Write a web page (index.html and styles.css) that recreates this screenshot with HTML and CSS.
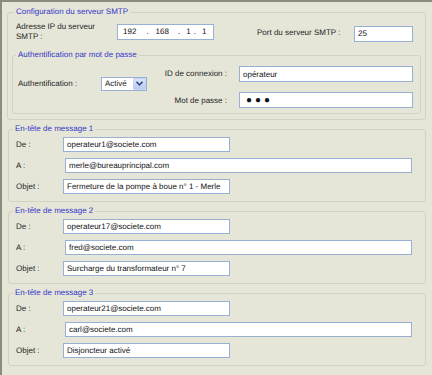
FILE: index.html
```html
<!DOCTYPE html>
<html lang="fr">
<head>
  <meta charset="UTF-8">
  <title>Configuration du serveur SMTP</title>
  <link rel="stylesheet" href="styles.css">
</head>
<body>
  <div class="frame">
    <fieldset class="group smtp">
      <legend>Configuration du serveur SMTP</legend>
      <div class="server-row">
        <label class="ip-label">Adresse IP du serveur<br>SMTP :</label>
        <div class="field ip">
          <span>192</span><span class="dot d1">.</span><span>168</span><span class="dot d2">.</span><span>1</span><span class="dot d3">.</span><span>1</span>
        </div>
        <label class="port-label">Port du serveur SMTP :</label>
        <input class="field port" type="text" value="25">
      </div>

      <fieldset class="group auth">
        <legend>Authentification par mot de passe</legend>
        <div class="auth-grid">
          <label class="auth-label">Authentification :</label>
          <div class="select">
            <span class="select-value">Activé</span>
            <span class="select-btn">
              <svg width="7" height="5" viewBox="0 0 7 5"><path d="M0.5 0.8 L3.5 3.8 L6.5 0.8" fill="none" stroke="#3b4f8a" stroke-width="1.6"/></svg>
            </span>
          </div>
          <label class="right-label id-label">ID de connexion :</label>
          <input class="field wide" type="text" value="opérateur">
          <label class="right-label pw-label">Mot de passe :</label>
          <input class="field wide pw" type="text" value="●●●" readonly>
        </div>
      </fieldset>
    </fieldset>

    <fieldset class="group msg">
      <legend>En-tête de message 1</legend>
      <div class="msg-grid">
        <label>De :</label>
        <input class="field short" type="text" value="operateur1@societe.com">
        <label>A :</label>
        <input class="field long" type="text" value="merle@bureauprincipal.com">
        <label>Objet :</label>
        <input class="field short" type="text" value="Fermeture de la pompe à boue n° 1 - Merle">
      </div>
    </fieldset>

    <fieldset class="group msg">
      <legend>En-tête de message 2</legend>
      <div class="msg-grid">
        <label>De :</label>
        <input class="field short" type="text" value="operateur17@societe.com">
        <label>A :</label>
        <input class="field long" type="text" value="fred@societe.com">
        <label>Objet :</label>
        <input class="field short" type="text" value="Surcharge du transformateur n° 7">
      </div>
    </fieldset>

    <fieldset class="group msg">
      <legend>En-tête de message 3</legend>
      <div class="msg-grid">
        <label>De :</label>
        <input class="field short" type="text" value="operateur21@societe.com">
        <label>A :</label>
        <input class="field long" type="text" value="carl@societe.com">
        <label>Objet :</label>
        <input class="field short" type="text" value="Disjoncteur activé">
      </div>
    </fieldset>
  </div>
</body>
</html>
```

FILE: styles.css
```css
* {
  box-sizing: border-box;
}
body {
  margin: 0;
  background-color: #e6e6d8;
  font-family: "Liberation Sans", Arial, sans-serif;
  font-size: 8px;
  color: #1e1e1e;
  text-rendering: geometricPrecision;
}
.frame {
  width: 432px;
  height: 375px;
  border-top: 2px solid #8b8b7e;
  border-left: 2px solid #8b8b7e;
  background-color: #e6e6d8;
  padding-top: 5px;
  overflow: hidden;
}

/* group boxes */
.group {
  border: 1px solid #d2d2c2;
  border-radius: 3px;
  margin: 0;
  min-width: 0;
}
.group legend {
  padding: 0 2px;
  line-height: 10px;
  font-size: 8px;
  color: #3434c8;
}
.smtp {
  margin: 0 6px 0 5px;
  padding: 5px 4px 5px 4px;
}
.smtp > legend {
  margin-left: 2px;
}
.auth {
  margin-top: 8px;
  padding: 6px 7px 5px 5px;
}
.auth > legend {
  margin-left: -2px;
}
.msg {
  margin: 4px 6px 0 6px;
  padding: 3px 12px 7px 7px;
}
.msg > legend {
  margin-left: -3px;
}

/* fields */
input, .field {
  font-family: "Liberation Sans", Arial, sans-serif;
  font-size: 8px;
  color: #111;
  outline: none;
  text-rendering: geometricPrecision;
}
.field {
  height: 15px;
  border: 1px solid #98b0d2;
  background-color: #fff;
  padding: 0 3px;
  margin: 0;
}

/* server row */
.server-row {
  display: flex;
  align-items: center;
  padding-left: 4px;
  line-height: 10px;
}
.ip-label {
  width: 101px;
}
.ip {
  width: 97px;
  height: 16px;
  display: flex;
  align-items: center;
  padding-left: 5px;
}
.ip .d1 {
  margin: 0 7px 0 10px;
}
.ip .d2 {
  margin: 0 6px 0 9px;
}
.ip .d3 {
  margin: 0 6px 0 3px;
}
.port-label {
  margin-left: 43px;
  width: 97px;
  margin-top: 2px;
}
.port {
  width: 59px;
  height: 16px;
  margin-top: 3px;
}

/* authentication */
.auth-grid {
  display: grid;
  grid-template-columns: 83px 46px 1fr 174px;
  grid-template-rows: 16px 16px;
  row-gap: 10px;
  align-items: center;
}
.auth-label,
.select {
  grid-row: 1 / 3;
  margin-bottom: 7px;
}
.select {
  height: 14px;
  border: 1px solid #98b0d2;
  background-color: #fff;
  display: flex;
  align-items: center;
}
.select-value {
  flex: 1;
  padding-left: 3px;
}
.select-btn {
  width: 13px;
  height: 12px;
  background: linear-gradient(to bottom, #dce6fb, #b9cbf2);
  border: 1px solid #c4d3f3;
  border-radius: 1px;
  display: flex;
  align-items: center;
  justify-content: center;
}
.right-label {
  text-align: right;
  padding-right: 12px;
}
.id-label {
  grid-column: 3;
  grid-row: 1;
  margin-top: -2px;
}
.pw-label {
  grid-column: 3;
  grid-row: 2;
}
.wide {
  width: 174px;
  height: 16px;
}
.pw {
  font-size: 10px;
  letter-spacing: 3px;
  padding-left: 6px;
}

/* message headers */
.msg-grid {
  display: grid;
  grid-template-columns: 47px 1fr;
  grid-auto-rows: 15px;
  row-gap: 6px;
  align-items: center;
}
.short {
  width: 167px;
}
.long {
  width: 347px;
  margin-left: 2px;
}
```
